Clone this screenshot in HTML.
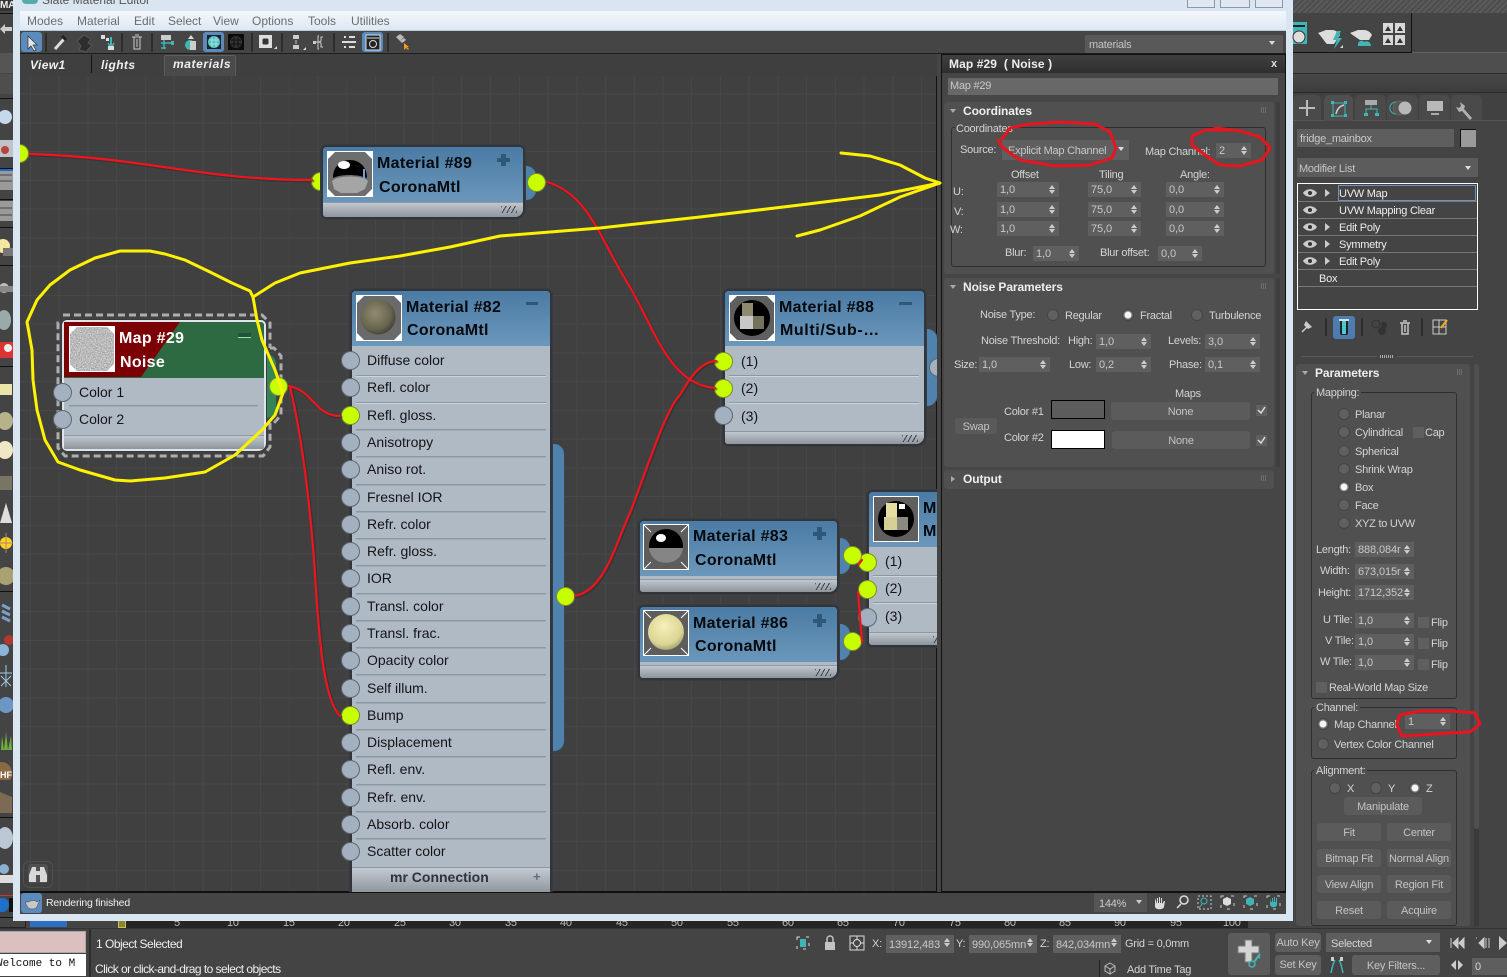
<!DOCTYPE html>
<html><head><meta charset="utf-8"><title>Slate Material Editor</title>
<style>
html,body{margin:0;padding:0;background:#444}
#p{position:relative;width:1507px;height:977px;overflow:hidden;background:#444;font:11px/14px "Liberation Sans",sans-serif;color:#d0d0d0}
#p div,#p span,#p svg{position:absolute;box-sizing:border-box}
.x{white-space:nowrap;color:#d4d4d4;margin-top:1px;letter-spacing:-.25px}
.f{background:#5f5f5f;color:#c8c8c8;padding-left:3px;height:15px;line-height:17px;white-space:nowrap;overflow:hidden;letter-spacing:-.1px}
.f:before,.f:after{content:"";position:absolute;right:4px;width:0;height:0;border-left:3px solid transparent;border-right:3px solid transparent}
.f:before{top:3px;border-bottom:4px solid #ccc}
.f:after{top:8px;border-top:4px solid #ccc}
.btn{background:#5b5b5b;border-radius:3px;color:#c4c4c4;text-align:center;line-height:20px;white-space:nowrap;letter-spacing:-.2px}
.r{width:12px;height:12px;border-radius:50%;background:#606060;border:1px solid #454545}
.r.on{background:radial-gradient(circle,#f4f4f4 0 3px,#6a6a6a 4px)}
.c{width:11px;height:11px;background:#5f5f5f}
.ro{background:#505050;border-radius:3px}
.g{border:1px solid #2f2f2f;border-radius:3px}
.rt{font-weight:bold;font-size:12px;color:#eee;white-space:nowrap;margin-top:1px;letter-spacing:-.1px}
.n{background:#b0bac4;border:2px solid #32363a;border-radius:6px 6px 10px 5px;box-shadow:0 0 0 1px #383c40}
.h{background:linear-gradient(#4a7ba4,#6c97bb);border-radius:4px 4px 0 0;left:0;top:0;right:0}
.ft{background:linear-gradient(#c0c7cd,#8d959d);left:0;right:0;bottom:0;height:13px;border-top:1px solid #8f99a3;border-radius:0 0 8px 4px}
.ft:after{content:"";position:absolute;right:6px;top:3px;width:16px;height:7px;background:repeating-linear-gradient(120deg,#3c4248 0 1px,transparent 1px 4px)}
.b{background:#4f83ad;border:1px solid #3c444c;border-radius:0 11px 11px 0}
.th{width:46px;height:46px;background:#fff}
.tt{font-weight:bold;font-size:16px;line-height:20px;color:#06090d;white-space:nowrap;margin-top:2px;letter-spacing:.3px}
.rw{font-size:14px;line-height:16px;color:#15131a;white-space:nowrap}
.s{width:19px;height:19px;border-radius:50%;background:#a2b0c0;border:1px solid #5f6871}
.y{background:#c8ff00;border:1px solid #7a8a30}
.l{height:2px;background:#cdd5db;border-top:1px solid #8d97a1}
.m{color:#6c6c6c;font-size:12px;white-space:nowrap}
</style></head><body><div id="p">

<!-- backdrop main UI top-right -->
<div style="left:1293px;top:0;width:214px;height:13px;background:repeating-linear-gradient(135deg,#5a5a5a 0 2px,#4d4d4d 2px 4px)"></div>
<div style="left:1293px;top:13px;width:214px;height:40px;background:#444"></div>
<div style="left:1293px;top:13px;width:119px;height:40px;border-right:1px solid #111;border-bottom:1px solid #111"></div>
<div style="left:1412px;top:52px;width:95px;height:1px;background:#666"></div>
<div style="left:1293px;top:53px;width:214px;height:20px;background:#4e4e4e"></div>
<div style="left:1293px;top:73px;width:214px;height:1px;background:#2a2a2a"></div>
<div style="left:1293px;top:74px;width:214px;height:19px;background:linear-gradient(#484848,#3c3c3c)"></div>
<div style="left:1293px;top:92px;width:214px;height:1px;background:#2a2a2a"></div>
<div style="left:1293px;top:93px;width:214px;height:28px;background:#414141"></div>
<div style="left:1293px;top:120px;width:214px;height:1px;background:#555"></div>
<div style="left:1293px;top:95px;width:28px;height:25px;background:#4a4a4a;border-radius:5px 5px 0 0"></div>
<div style="left:1324px;top:95px;width:29px;height:26px;background:#4f4f4f;border-radius:5px 5px 0 0"></div>
<div style="left:1355px;top:95px;width:31px;height:25px;background:#4a4a4a;border-radius:5px 5px 0 0"></div>
<div style="left:1387px;top:95px;width:31px;height:25px;background:#4a4a4a;border-radius:5px 5px 0 0"></div>
<div style="left:1419px;top:95px;width:31px;height:25px;background:#4a4a4a;border-radius:5px 5px 0 0"></div>
<div style="left:1451px;top:95px;width:31px;height:25px;background:#4a4a4a;border-radius:5px 5px 0 0"></div>

<!-- command panel -->
<div style="left:1297px;top:129px;width:157px;height:18px;background:#5e5e5e"></div>
<div class="x" style="left:1300px;top:131px;color:#c8c8c8">fridge_mainbox</div>
<div style="left:1460px;top:129px;width:16px;height:18px;background:#9a9a9a;border-left:1px solid #111;border-top:1px solid #111"></div>
<div style="left:1297px;top:158px;width:181px;height:19px;background:#5c5c5c"></div>
<div class="x" style="left:1299px;top:161px;color:#c4c4c4">Modifier List</div>
<div style="left:1297px;top:183px;width:181px;height:127px;border:1px solid #fff"></div>
<div style="left:1298px;top:201px;width:179px;height:1px;background:#777"></div>
<div style="left:1298px;top:218px;width:179px;height:1px;background:#777"></div>
<div style="left:1298px;top:235px;width:179px;height:1px;background:#777"></div>
<div style="left:1298px;top:252px;width:179px;height:1px;background:#777"></div>
<div style="left:1298px;top:269px;width:179px;height:1px;background:#777"></div>
<div style="left:1298px;top:286px;width:179px;height:1px;background:#777"></div>
<div style="left:1338px;top:185px;width:138px;height:16px;border:1px solid #6f93bd"></div>
<div class="x" style="left:1339px;top:186px;color:#eee">UVW Map</div>
<div class="x" style="left:1339px;top:203px;color:#eee">UVW Mapping Clear</div>
<div class="x" style="left:1339px;top:220px;color:#eee">Edit Poly</div>
<div class="x" style="left:1339px;top:237px;color:#eee">Symmetry</div>
<div class="x" style="left:1339px;top:254px;color:#eee">Edit Poly</div>
<div class="x" style="left:1319px;top:271px;color:#eee">Box</div>
<div style="left:1333px;top:316px;width:22px;height:23px;background:#4e7cb0;border-radius:3px"></div>
<div style="left:1301px;top:356px;width:76px;height:1px;background:#5c5c5c"></div>
<div style="left:1397px;top:356px;width:76px;height:1px;background:#5c5c5c"></div>
<div style="left:1380px;top:355px;width:13px;height:3px;background:repeating-linear-gradient(90deg,#aaa 0 1px,transparent 1px 2px)"></div>

<div class="ro" style="left:1296px;top:364px;width:174px;height:562px"></div>
<div style="left:1474px;top:364px;width:5px;height:562px;background:#3a3a3a;border-radius:2px"></div>
<div style="left:1474px;top:364px;width:5px;height:465px;background:#505050;border-radius:2px"></div>
<div class="rt" style="left:1315px;top:365px">Parameters</div>
<div class="g" style="left:1311px;top:392px;width:146px;height:307px"></div>
<div class="x" style="left:1314px;top:385px;background:#505050;padding:0 2px">Mapping:</div>
<div class="r" style="left:1338px;top:408px"></div><div class="x" style="left:1355px;top:407px">Planar</div>
<div class="r" style="left:1338px;top:426px"></div><div class="x" style="left:1355px;top:425px">Cylindrical</div>
<div class="c" style="left:1413px;top:427px"></div><div class="x" style="left:1425px;top:425px">Cap</div>
<div class="r" style="left:1338px;top:445px"></div><div class="x" style="left:1355px;top:444px">Spherical</div>
<div class="r" style="left:1338px;top:463px"></div><div class="x" style="left:1355px;top:462px">Shrink Wrap</div>
<div class="r on" style="left:1338px;top:481px"></div><div class="x" style="left:1355px;top:480px">Box</div>
<div class="r" style="left:1338px;top:499px"></div><div class="x" style="left:1355px;top:498px">Face</div>
<div class="r" style="left:1338px;top:517px"></div><div class="x" style="left:1355px;top:516px">XYZ to UVW</div>
<div class="x" style="left:1316px;top:542px">Length:</div><div class="f" style="left:1355px;top:542px;width:59px">888,084r</div>
<div class="x" style="left:1320px;top:563px">Width:</div><div class="f" style="left:1355px;top:564px;width:59px">673,015r</div>
<div class="x" style="left:1318px;top:585px">Height:</div><div class="f" style="left:1355px;top:585px;width:59px">1712,352</div>
<div class="x" style="left:1323px;top:612px">U Tile:</div><div class="f" style="left:1355px;top:613px;width:59px">1,0</div><div class="c" style="left:1418px;top:617px"></div><div class="x" style="left:1431px;top:615px">Flip</div>
<div class="x" style="left:1325px;top:633px">V Tile:</div><div class="f" style="left:1355px;top:634px;width:59px">1,0</div><div class="c" style="left:1418px;top:638px"></div><div class="x" style="left:1431px;top:636px">Flip</div>
<div class="x" style="left:1320px;top:654px">W Tile:</div><div class="f" style="left:1355px;top:655px;width:59px">1,0</div><div class="c" style="left:1418px;top:659px"></div><div class="x" style="left:1431px;top:657px">Flip</div>
<div class="c" style="left:1316px;top:682px"></div><div class="x" style="left:1329px;top:680px">Real-World Map Size</div>
<div class="g" style="left:1311px;top:707px;width:146px;height:52px"></div>
<div class="x" style="left:1314px;top:700px;background:#505050;padding:0 2px">Channel:</div>
<div class="r on" style="left:1317px;top:718px"></div><div class="x" style="left:1334px;top:717px">Map Channel:</div>
<div class="f" style="left:1405px;top:714px;width:45px">1</div>
<div class="r" style="left:1317px;top:738px"></div><div class="x" style="left:1334px;top:737px">Vertex Color Channel</div>
<div class="g" style="left:1311px;top:770px;width:146px;height:156px"></div>
<div class="x" style="left:1314px;top:763px;background:#505050;padding:0 2px">Alignment:</div>
<div class="r" style="left:1329px;top:782px"></div><div class="x" style="left:1347px;top:781px">X</div>
<div class="r" style="left:1370px;top:782px"></div><div class="x" style="left:1388px;top:781px">Y</div>
<div class="r on" style="left:1409px;top:782px"></div><div class="x" style="left:1426px;top:781px">Z</div>
<div class="btn" style="left:1344px;top:797px;width:78px;height:18px">Manipulate</div>
<div class="btn" style="left:1317px;top:823px;width:64px;height:18px">Fit</div><div class="btn" style="left:1387px;top:823px;width:64px;height:18px">Center</div>
<div class="btn" style="left:1317px;top:849px;width:64px;height:18px">Bitmap Fit</div><div class="btn" style="left:1387px;top:849px;width:64px;height:18px">Normal Align</div>
<div class="btn" style="left:1317px;top:875px;width:64px;height:18px">View Align</div><div class="btn" style="left:1387px;top:875px;width:64px;height:18px">Region Fit</div>
<div class="btn" style="left:1317px;top:901px;width:64px;height:18px">Reset</div><div class="btn" style="left:1387px;top:901px;width:64px;height:18px">Acquire</div>

<!-- bottom bar -->
<div style="left:0;top:928px;width:1507px;height:1px;background:#333"></div>
<div style="left:118px;top:918px;width:1130px;height:10px;background:#252525"></div>
<div style="left:118px;top:919px;width:8px;height:9px;background:#8a8530;border:1px solid #c8bf60"></div>
<div style="left:30px;top:915px;width:37px;height:12px;background:#2d6fc5"></div>
<div style="left:0;top:915px;width:26px;height:13px;border-right:1px solid #222;border-bottom:1px solid #222"></div>
<div class="x" style="left:174px;top:915px;color:#bbb">5</div><div class="x" style="left:227px;top:915px;color:#bbb">10</div><div class="x" style="left:283px;top:915px;color:#bbb">15</div><div class="x" style="left:338px;top:915px;color:#bbb">20</div><div class="x" style="left:394px;top:915px;color:#bbb">25</div><div class="x" style="left:449px;top:915px;color:#bbb">30</div><div class="x" style="left:505px;top:915px;color:#bbb">35</div><div class="x" style="left:560px;top:915px;color:#bbb">40</div><div class="x" style="left:616px;top:915px;color:#bbb">45</div><div class="x" style="left:671px;top:915px;color:#bbb">50</div><div class="x" style="left:727px;top:915px;color:#bbb">55</div><div class="x" style="left:782px;top:915px;color:#bbb">60</div><div class="x" style="left:837px;top:915px;color:#bbb">65</div><div class="x" style="left:893px;top:915px;color:#bbb">70</div><div class="x" style="left:949px;top:915px;color:#bbb">75</div><div class="x" style="left:1004px;top:915px;color:#bbb">80</div><div class="x" style="left:1059px;top:915px;color:#bbb">85</div><div class="x" style="left:1114px;top:915px;color:#bbb">90</div><div class="x" style="left:1170px;top:915px;color:#bbb">95</div><div class="x" style="left:1223px;top:915px;color:#bbb">100</div>
<div style="left:0;top:931px;width:86px;height:22px;background:#dcc0c0;border:1px solid #aaa;border-left:0"></div>
<div style="left:0;top:954px;width:86px;height:22px;background:#fff;overflow:hidden"><span style="left:-4px;top:3px;font:11px/14px 'Liberation Mono',monospace;color:#111;white-space:nowrap">Welcome to M</span></div>
<div style="left:89px;top:929px;width:2px;height:48px;background:#2d2d2d"></div>
<div class="x" style="left:96px;top:936px;color:#eee;font-size:12px;letter-spacing:-.5px">1 Object Selected</div>
<div class="x" style="left:95px;top:961px;color:#eee;font-size:12px;letter-spacing:-.55px">Click or click-and-drag to select objects</div>
<div class="x" style="left:872px;top:936px">X:</div><div class="f" style="left:886px;top:935px;width:68px;height:18px;line-height:20px">13912,483</div>
<div class="x" style="left:956px;top:936px">Y:</div><div class="f" style="left:969px;top:935px;width:68px;height:18px;line-height:20px">990,065mn</div>
<div class="x" style="left:1040px;top:936px">Z:</div><div class="f" style="left:1053px;top:935px;width:68px;height:18px;line-height:20px">842,034mn</div>
<div class="x" style="left:1125px;top:936px">Grid = 0,0mm</div>
<div style="left:1099px;top:960px;width:1px;height:17px;background:#222"></div>
<div class="x" style="left:1127px;top:962px">Add Time Tag</div>
<div class="btn" style="left:1228px;top:933px;width:42px;height:42px"></div>
<div class="btn" style="left:1275px;top:933px;width:46px;height:19px;background:#5e5e5e">Auto Key</div>
<div class="btn" style="left:1275px;top:955px;width:46px;height:20px;background:#5e5e5e">Set Key</div>
<div style="left:1326px;top:933px;width:114px;height:19px;background:#5e5e5e"></div><div class="x" style="left:1331px;top:936px">Selected</div>
<div class="btn" style="left:1352px;top:955px;width:88px;height:20px;background:#5e5e5e;line-height:22px">Key Filters...</div>
<div style="left:1472px;top:958px;width:35px;height:17px;background:#5e5e5e"></div><div class="x" style="left:1475px;top:959px">0</div>

<!-- left sidebar base -->
<div style="left:0;top:0;width:13px;height:11px;background:#333"></div>
<div class="x" style="left:0;top:-2px;font-weight:bold;color:#eee;font-size:10px">MA</div>
<div style="left:0;top:13px;width:13px;height:1px;background:#111"></div>
<div style="left:0;top:53px;width:13px;height:20px;background:#555"></div>
<div style="left:0;top:74px;width:13px;height:20px;background:#4e4e4e"></div>
<div style="left:0;top:98px;width:13px;height:1px;background:#111"></div>
<div style="left:0;top:168px;width:13px;height:1px;background:#111"></div>
<div style="left:0;top:199px;width:13px;height:1px;background:#111"></div>
<div style="left:0;top:227px;width:13px;height:1px;background:#111"></div>
<div style="left:0;top:265px;width:13px;height:1px;background:#111"></div>
<div style="left:0;top:366px;width:13px;height:1px;background:#111"></div>
<div style="left:0;top:591px;width:13px;height:1px;background:#111"></div>
<div style="left:0;top:817px;width:13px;height:1px;background:#111"></div>
<div style="left:0;top:895px;width:13px;height:1px;background:#c33"></div>
<div style="left:0;top:917px;width:13px;height:1px;background:#111"></div>
<svg style="left:0;top:0" width="13" height="930" viewBox="0 0 13 930">
<path d="M0 29l5-5v3h7v4H5v3z" fill="#ccc"/>
<circle cx="5" cy="117" r="7" fill="#c5d9ee"/>
<rect x="0" y="140" width="13" height="17" fill="#bfc4cc"/><circle cx="5" cy="150" r="4" fill="#b8443c"/>
<rect x="0" y="170" width="13" height="20" fill="#9a9a9a"/><path d="M0 175h12M0 181h12" stroke="#444"/><rect y="169" width="13" height="2" fill="#2266cc"/>
<rect x="0" y="201" width="13" height="20" fill="#9a9a9a"/><path d="M0 208h12M0 215h12" stroke="#444"/>
<circle cx="3" cy="246" r="7" fill="#f5e6a0"/><rect x="3" y="248" width="10" height="8" fill="#777"/>
<circle cx="4" cy="288" r="5" fill="#bbb"/><rect x="0" y="286" width="13" height="6" fill="#888"/>
<ellipse cx="4" cy="320" rx="7" ry="10" fill="#9aa"/>
<rect y="342" width="13" height="16" fill="#d33"/><circle cx="8" cy="348" r="4" fill="#eee"/>
<rect x="0" y="384" width="12" height="11" fill="#ece5a8"/>
<ellipse cx="5" cy="421" rx="8" ry="9" fill="#b6b28a"/>
<ellipse cx="5" cy="450" rx="8" ry="9" fill="#eee8c4"/>
<rect x="0" y="476" width="12" height="14" fill="#7a7464"/>
<path d="M6 503l6 20H0z" fill="#ddd"/>
<circle cx="6" cy="543" r="6" fill="#ffd21f"/><path d="M6 533v20M-2 543h16" stroke="#a87" />
<circle cx="6" cy="576" r="9" fill="#a8a270"/>
<path d="M2 605l8 4M2 611l8 4M2 617l8 4" stroke="#7aa0c8" stroke-width="3"/>
<circle cx="9" cy="640" r="5" fill="#b03a30"/><circle cx="3" cy="650" r="6" fill="#8cb4d8"/>
<path d="M6 665v22M0 673h12M1 686l10-10M1 676l10 10" stroke="#9ec8e0"/>
<circle cx="6" cy="705" r="8" fill="#6c96c4"/>
<path d="M1 750l1-14 2 14 2-18 2 18 3-14 1 14z" fill="#6fae3e"/>
<path d="M0 762c8 0 12 4 12 14l-2 4H0z" fill="#8a6a44"/><text x="0" y="778" font-size="9" fill="#fff" font-weight="bold">HF</text>
<path d="M0 792l12 5v16H0z" fill="#7d6a55"/>
<ellipse cx="5" cy="838" rx="8" ry="11" fill="#bcc8d6"/>
<circle cx="4" cy="869" r="5" fill="#8cb0d0"/><rect y="875" width="13" height="8" fill="#ddd"/>
<circle cx="2" cy="905" r="7" fill="#1f6fcc"/><rect x="9" y="898" width="4" height="14" fill="#111"/>
</svg>

<!-- window -->
<div style="left:13px;top:0;width:1280px;height:921px;background:#d9e5f1"></div>
<div style="left:20px;top:11px;width:1266px;height:20px;background:linear-gradient(#f3f7fc,#dde8f4);border-bottom:1px solid #b8c8d8"></div>
<div style="left:22px;top:0;width:16px;height:4px;background:#5aa;border-radius:0 0 6px 6px"></div>
<div class="x" style="left:42px;top:-8px;color:#555;font-size:12px;letter-spacing:0">Slate Material Editor</div>
<div style="left:1187px;top:-2px;width:28px;height:10px;border:1px solid #8a98a8;background:#dfe8f2"></div>
<div style="left:1220px;top:-2px;width:30px;height:10px;border:1px solid #8a98a8;background:#dfe8f2"></div>
<div style="left:1255px;top:-2px;width:28px;height:10px;border:1px solid #8a98a8;background:#dfe8f2"></div>
<div class="m" style="left:27px;top:14px">Modes</div><div class="m" style="left:77px;top:14px">Material</div><div class="m" style="left:134px;top:14px">Edit</div><div class="m" style="left:168px;top:14px">Select</div><div class="m" style="left:213px;top:14px">View</div><div class="m" style="left:252px;top:14px">Options</div><div class="m" style="left:308px;top:14px">Tools</div><div class="m" style="left:351px;top:14px">Utilities</div>

<div style="left:20px;top:31px;width:1266px;height:883px;background:#454545"></div>
<div style="left:20px;top:53px;width:1266px;height:1px;background:#1d1d1d"></div>
<div style="left:21px;top:32px;width:21px;height:20px;background:#5b8abd;border-radius:3px"></div>
<div style="left:203px;top:32px;width:21px;height:20px;background:#5b8abd;border-radius:3px"></div>
<div style="left:362px;top:32px;width:21px;height:20px;background:#5b8abd;border-radius:3px"></div>
<div style="left:1085px;top:35px;width:198px;height:18px;background:#595959"></div>
<div class="x" style="left:1089px;top:37px;color:#c4c4c4">materials</div>

<!-- tabs -->
<div style="left:20px;top:54px;width:917px;height:22px;background:#3f3f3f"></div>
<div style="left:91px;top:55px;width:1px;height:18px;background:#151515"></div>
<div style="left:164px;top:55px;width:72px;height:21px;background:#4a4a4a;border:1px solid #5e5e5e;border-bottom:0;border-radius:2px 2px 0 0"></div>
<div class="x" style="left:30px;top:57px;font:italic bold 12px/14px 'Liberation Sans',sans-serif;letter-spacing:.4px;color:#f0f0f0">View1</div>
<div class="x" style="left:101px;top:57px;font:italic bold 12px/14px 'Liberation Sans',sans-serif;letter-spacing:.4px;color:#f0f0f0">lights</div>
<div class="x" style="left:173px;top:56px;font:italic bold 12px/14px 'Liberation Sans',sans-serif;letter-spacing:.6px;color:#f0f0f0">materials</div>

<!-- canvas -->
<div style="left:20px;top:76px;width:917px;height:816px;background-color:#404040;background-image:repeating-linear-gradient(90deg,transparent 0 10px,#474747 10px 11px,transparent 11px 28.75px),repeating-linear-gradient(0deg,transparent 0 20px,#474747 20px 21px,transparent 21px 28.75px);border-bottom:1px solid #111;border-right:1px solid #111"></div>

<div style="left:0;top:0;width:937px;height:892px;clip-path:inset(76px 0 0 20px)">
<div class="s y" style="left:10px;top:144px"></div>
<div class="s y" style="left:311px;top:172px"></div>

<!-- #89 -->
<div class="b" style="left:520px;top:165px;width:17px;height:36px"></div>
<div class="s y" style="left:527px;top:173px"></div>
<div class="n" style="left:321px;top:145px;width:204px;height:74px"><div class="h" style="height:56px"></div><div class="ft" style="height:15px"></div></div>
<svg class="th" style="left:327px;top:151px" viewBox="0 0 46 46"><rect width="46" height="46" fill="#fff"/><path d="M8 1H38L45 8V38L38 45H8L1 38V8Z" fill="#6e6e6e"/><path d="M5 30C10 24 36 24 41 30L38 38 30 42H14L7 38Z" fill="#a5a5a5"/><path d="M6 27C6 3 40 3 40 27C30 23 14 23 6 27Z" fill="#000"/><ellipse cx="17" cy="14" rx="6" ry="4" fill="#fff"/><path d="M37 18v10" stroke="#6f9fd0" stroke-width="2"/></svg>
<div class="tt" style="left:377px;top:152px">Material #89</div><div class="tt" style="left:379px;top:176px">CoronaMtl</div>
<div style="left:497px;top:158px;width:13px;height:4px;background:#2d5878"></div><div style="left:501px;top:154px;width:5px;height:12px;background:#2d5878"></div>

<!-- Map 29 selection -->
<svg style="left:50px;top:308px" width="240" height="155" viewBox="50 308 240 155" fill="none" stroke="#aeaeae" stroke-width="3" stroke-dasharray="7 4"><path d="M63 315H262L270 323V348M270 348H274L281 356V415L274 423H270V447L263 456H65L58 448V323Z"/></svg>
<div class="b" style="left:262px;top:353px;width:15px;height:66px;background:#338556"></div>
<div class="n" style="left:62px;top:320px;width:204px;height:131px;border:2px solid #dfe4e8;border-radius:5px 5px 8px 5px"><div class="h" style="height:56px;border-radius:3px 3px 0 0;background:#2e6a41"></div></div>
<svg style="left:64px;top:322px" width="120" height="55"><path d="M0 0H116L77 55H0z" fill="#7b0006"/></svg>
<svg class="th" style="left:69px;top:326px" viewBox="0 0 46 46"><defs><clipPath id="oc"><path d="M8 1H38L45 8V38L38 45H8L1 38V8Z"/></clipPath><filter id="nz" x="0" y="0" width="100%" height="100%" color-interpolation-filters="sRGB"><feTurbulence type="fractalNoise" baseFrequency=".8" numOctaves="2"/><feColorMatrix values=".5 0 0 0 .48 .5 0 0 0 .48 .5 0 0 0 .48 0 0 0 0 1"/></filter></defs><rect width="46" height="46" fill="#fff"/><g clip-path="url(#oc)"><rect width="46" height="46" fill="#b5b5b5" filter="url(#nz)"/></g></svg>
<div class="tt" style="left:119px;top:327px;color:#fff">Map #29</div><div class="tt" style="left:120px;top:351px;color:#fff">Noise</div>
<div style="left:238px;top:333px;width:13px;height:5px;background:#21533a;border-bottom:1px solid #9db"></div>
<div class="l" style="left:69px;top:405px;width:189px;background:#a0aab4"></div>
<div style="left:64px;top:435px;width:200px;height:14px;background:linear-gradient(#c0c7cd,#8d959d);border-top:1px solid #8f99a3"></div>
<div class="rw" style="left:79px;top:384px">Color 1</div><div class="rw" style="left:79px;top:411px">Color 2</div>
<div class="s" style="left:53px;top:383px"></div><div class="s" style="left:53px;top:410px"></div>
<div class="s y" style="left:269px;top:377px"></div>

<!-- #82 -->
<div class="b" style="left:548px;top:443px;width:17px;height:309px"></div>
<div class="n" style="left:350px;top:289px;width:202px;height:610px"><div class="h" style="height:55px"></div></div>
<svg class="th" style="left:356px;top:295px" viewBox="0 0 46 46"><defs><radialGradient id="o1" cx=".42" cy=".4" r=".65"><stop offset="0" stop-color="#8f8c70"/><stop offset=".7" stop-color="#67644e"/><stop offset="1" stop-color="#3e3d30"/></radialGradient></defs><rect width="46" height="46" fill="#fff"/><path d="M8 1H38L45 8V38L38 45H8L1 38V8Z" fill="#6a6a6a"/><circle cx="22" cy="22" r="17.500" fill="url(#o1)"/></svg>
<div class="tt" style="left:406px;top:296px">Material #82</div><div class="tt" style="left:407px;top:319px">CoronaMtl</div>
<div style="left:526px;top:302px;width:12px;height:3px;background:#2d5878"></div>
<div class="l" style="left:356px;top:375px;width:190px"></div><div class="l" style="left:356px;top:402px;width:190px"></div><div class="l" style="left:356px;top:429px;width:190px;background:#a0aab4"></div><div class="l" style="left:356px;top:456px;width:190px;background:#a0aab4"></div><div class="l" style="left:356px;top:484px;width:190px;background:#a0aab4"></div><div class="l" style="left:356px;top:511px;width:190px;background:#a0aab4"></div><div class="l" style="left:356px;top:538px;width:190px;background:#a0aab4"></div><div class="l" style="left:356px;top:565px;width:190px;background:#a0aab4"></div><div class="l" style="left:356px;top:593px;width:190px;background:#a0aab4"></div><div class="l" style="left:356px;top:620px;width:190px;background:#a0aab4"></div><div class="l" style="left:356px;top:647px;width:190px;background:#a0aab4"></div><div class="l" style="left:356px;top:674px;width:190px;background:#a0aab4"></div><div class="l" style="left:356px;top:702px;width:190px;background:#a0aab4"></div><div class="l" style="left:356px;top:729px;width:190px;background:#a0aab4"></div><div class="l" style="left:356px;top:756px;width:190px;background:#a0aab4"></div><div class="l" style="left:356px;top:784px;width:190px;background:#a0aab4"></div><div class="l" style="left:356px;top:811px;width:190px;background:#a0aab4"></div><div class="l" style="left:356px;top:838px;width:190px;background:#a0aab4"></div>
<div class="rw" style="left:367px;top:352px">Diffuse color</div>
<div class="rw" style="left:367px;top:379px">Refl. color</div>
<div class="rw" style="left:367px;top:407px">Refl. gloss.</div>
<div class="rw" style="left:367px;top:434px">Anisotropy</div>
<div class="rw" style="left:367px;top:461px">Aniso rot.</div>
<div class="rw" style="left:367px;top:489px">Fresnel IOR</div>
<div class="rw" style="left:367px;top:516px">Refr. color</div>
<div class="rw" style="left:367px;top:543px">Refr. gloss.</div>
<div class="rw" style="left:367px;top:570px">IOR</div>
<div class="rw" style="left:367px;top:598px">Transl. color</div>
<div class="rw" style="left:367px;top:625px">Transl. frac.</div>
<div class="rw" style="left:367px;top:652px">Opacity color</div>
<div class="rw" style="left:367px;top:680px">Self illum.</div>
<div class="rw" style="left:367px;top:707px">Bump</div>
<div class="rw" style="left:367px;top:734px">Displacement</div>
<div class="rw" style="left:367px;top:761px">Refl. env.</div>
<div class="rw" style="left:367px;top:789px">Refr. env.</div>
<div class="rw" style="left:367px;top:816px">Absorb. color</div>
<div class="rw" style="left:367px;top:843px">Scatter color</div>
<div style="left:352px;top:867px;width:198px;height:25px;background:linear-gradient(#c3cad0,#8f979f);border-top:1px solid #8f99a3"></div>
<div class="x" style="left:390px;top:869px;font-weight:bold;font-size:14px;color:#2a3440;letter-spacing:0">mr Connection</div>
<div class="x" style="left:533px;top:869px;font-weight:bold;font-size:13px;color:#5f7080">+</div>
<div class="s" style="left:341px;top:351px"></div><div class="s" style="left:341px;top:378px"></div><div class="s y" style="left:341px;top:406px"></div><div class="s" style="left:341px;top:433px"></div><div class="s" style="left:341px;top:460px"></div><div class="s" style="left:341px;top:488px"></div><div class="s" style="left:341px;top:515px"></div><div class="s" style="left:341px;top:542px"></div><div class="s" style="left:341px;top:569px"></div><div class="s" style="left:341px;top:597px"></div><div class="s" style="left:341px;top:624px"></div><div class="s" style="left:341px;top:651px"></div><div class="s" style="left:341px;top:679px"></div><div class="s y" style="left:341px;top:706px"></div><div class="s" style="left:341px;top:733px"></div><div class="s" style="left:341px;top:760px"></div><div class="s" style="left:341px;top:788px"></div><div class="s" style="left:341px;top:815px"></div><div class="s" style="left:341px;top:842px"></div>
<div class="s y" style="left:556px;top:587px"></div>

<!-- #88 -->
<div class="b" style="left:921px;top:328px;width:17px;height:79px"></div>
<div class="s" style="left:929px;top:358px"></div>
<div class="n" style="left:723px;top:289px;width:203px;height:157px"><div class="h" style="height:55px"></div><div class="ft"></div></div>
<svg class="th" style="left:729px;top:295px" viewBox="0 0 46 46"><rect width="46" height="46" fill="#fff"/><path d="M8 1H38L45 8V38L38 45H8L1 38V8Z" fill="#5f5f5f"/><circle cx="23" cy="23" r="18" fill="#000"/><rect x="13" y="8" width="11" height="13" fill="#8d8a70"/><rect x="24" y="21" width="11" height="13" fill="#74725c"/><rect x="11" y="21" width="13" height="13" fill="#c8c8c8"/></svg>
<div class="tt" style="left:779px;top:296px">Material #88</div><div class="tt" style="left:780px;top:319px;letter-spacing:.6px">Multi/Sub-…</div>
<div style="left:899px;top:302px;width:13px;height:3px;background:#2d5878"></div>
<div class="l" style="left:729px;top:375px;width:190px"></div><div class="l" style="left:729px;top:402px;width:190px"></div>
<div class="rw" style="left:741px;top:353px">(1)</div><div class="rw" style="left:741px;top:380px">(2)</div><div class="rw" style="left:741px;top:408px">(3)</div>
<div class="s y" style="left:714px;top:352px"></div><div class="s y" style="left:714px;top:379px"></div><div class="s" style="left:714px;top:406px"></div>

<!-- M -->
<div class="n" style="left:867px;top:490px;width:90px;height:157px"><div class="h" style="height:55px"></div><div class="ft"></div></div>
<svg class="th" style="left:873px;top:496px" viewBox="0 0 46 46"><rect width="46" height="46" fill="#fff"/><rect x="1" y="1" width="44" height="44" fill="#5f5f5f"/><circle cx="23" cy="23" r="18" fill="#000"/><rect x="13" y="7" width="11" height="14" fill="#e6dea0"/><rect x="24" y="21" width="11" height="13" fill="#8a8a80"/><rect x="11" y="21" width="13" height="13" fill="#d6cf96"/><rect x="26" y="8" width="6" height="5" fill="#fff"/></svg>
<div class="tt" style="left:923px;top:497px">Material</div><div class="tt" style="left:923px;top:520px">Multi</div>
<div class="l" style="left:873px;top:575px;width:80px"></div><div class="l" style="left:873px;top:602px;width:80px"></div>
<div class="rw" style="left:885px;top:553px">(1)</div><div class="rw" style="left:885px;top:580px">(2)</div><div class="rw" style="left:885px;top:608px">(3)</div>
<div class="s y" style="left:858px;top:553px"></div><div class="s y" style="left:858px;top:580px"></div><div class="s" style="left:858px;top:608px"></div>

<!-- #83 / #86 -->
<div class="b" style="left:834px;top:537px;width:17px;height:38px"></div>
<div class="n" style="left:638px;top:519px;width:201px;height:75px"><div class="h" style="height:55px"></div><div class="ft"></div></div>
<svg class="th" style="left:643px;top:524px" viewBox="0 0 46 46"><rect width="46" height="46" fill="#fff"/><rect x="1" y="1" width="44" height="44" fill="#5d5d5d"/><path d="M1 1l7 7M45 1l-7 7M1 45l7-7M45 45l-7-7" stroke="#fff"/><circle cx="23" cy="22" r="17" fill="#000"/><path d="M6 24H40C39 33 32 39 23 39S7 33 6 24Z" fill="#858585"/><ellipse cx="18" cy="14" rx="5" ry="4" fill="#fff"/></svg>
<div class="tt" style="left:693px;top:525px">Material #83</div><div class="tt" style="left:695px;top:549px">CoronaMtl</div>
<div style="left:813px;top:532px;width:13px;height:4px;background:#2d5878"></div><div style="left:817px;top:527px;width:5px;height:13px;background:#2d5878"></div>
<div class="s y" style="left:843px;top:546px"></div>

<div class="b" style="left:834px;top:623px;width:17px;height:38px"></div>
<div class="n" style="left:638px;top:605px;width:201px;height:75px"><div class="h" style="height:55px"></div><div class="ft"></div></div>
<svg class="th" style="left:643px;top:610px" viewBox="0 0 46 46"><defs><radialGradient id="o2" cx=".45" cy=".35" r=".7"><stop offset="0" stop-color="#f4f0b8"/><stop offset=".7" stop-color="#dcd695"/><stop offset="1" stop-color="#99966a"/></radialGradient></defs><rect width="46" height="46" fill="#fff"/><rect x="1" y="1" width="44" height="44" fill="#5d5d5d"/><path d="M1 1l7 7M45 1l-7 7M1 45l7-7M45 45l-7-7" stroke="#fff"/><circle cx="23" cy="22" r="18" fill="url(#o2)"/></svg>
<div class="tt" style="left:693px;top:612px">Material #86</div><div class="tt" style="left:695px;top:635px">CoronaMtl</div>
<div style="left:813px;top:619px;width:13px;height:4px;background:#2d5878"></div><div style="left:817px;top:614px;width:5px;height:13px;background:#2d5878"></div>
<div class="s y" style="left:843px;top:632px"></div>

<svg style="left:0;top:0" width="937" height="892" viewBox="0 0 937 892" fill="none" stroke-linecap="round">
<g stroke="#2a2a2a" stroke-width="3" opacity=".5" transform="translate(1,1)">
<path d="M30 154C150 158 200 180 312 180"/><path d="M547 182C590 195 600 240 630 287C655 330 670 385 715 388"/><path d="M575 596C605 590 615 545 630 513C645 475 665 410 680 395C690 378 700 362 716 361"/><path d="M289 386C315 392 315 416 340 416"/><path d="M290 387C303 440 312 520 316 590C320 650 325 700 340 716"/>
</g>
<g stroke="#f2131c" stroke-width="2.2">
<path d="M30 154C150 158 200 180 312 180"/><path d="M547 182C590 195 600 240 630 287C655 330 670 385 715 388"/><path d="M575 596C605 590 615 545 630 513C645 475 665 410 680 395C690 378 700 362 716 361"/><path d="M289 386C315 392 315 416 340 416"/><path d="M290 387C303 440 312 520 316 590C320 650 325 700 340 716"/>
<path d="M859 564l3-4M858 592l4 50"/>
</g>
</svg>
</div>

<!-- binoculars + status -->
<div style="left:23px;top:861px;width:30px;height:27px;border:1px solid #4f4f4f;border-radius:6px"></div>
<div style="left:20px;top:892px;width:1266px;height:22px;background:#454545;border-top:1px solid #111"></div>
<div style="left:21px;top:893px;width:21px;height:20px;background:#5b8abd;border-radius:3px"></div>
<div class="x" style="left:46px;top:895px;color:#f0f0f0;font-size:10.5px;letter-spacing:-.2px">Rendering finished</div>
<div style="left:1094px;top:893px;width:53px;height:19px;background:#555"></div>
<div class="x" style="left:1099px;top:896px;color:#ccc">144%</div>

<!-- right material panel -->
<div style="left:941px;top:54px;width:345px;height:838px;background:#464646;border:1px solid #111"></div>
<div style="left:942px;top:55px;width:343px;height:18px;background:linear-gradient(#3f3f3f,#2f2f2f)"></div>
<div class="x" style="left:949px;top:56px;font-weight:bold;font-size:12px;color:#eee;white-space:pre;letter-spacing:.1px">Map #29  ( Noise )</div>
<div class="x" style="left:1271px;top:56px;font-weight:bold;font-size:11px;color:#ddd">x</div>
<div style="left:948px;top:78px;width:330px;height:17px;background:#686868"></div>
<div class="x" style="left:950px;top:78px;color:#c8c8c8">Map #29</div>

<div class="ro" style="left:944px;top:102px;width:330px;height:172px"></div>
<div style="left:1276px;top:102px;width:4px;height:172px;background:#3f3f3f"></div>
<div class="rt" style="left:963px;top:103px">Coordinates</div>
<div class="g" style="left:951px;top:127px;width:315px;height:140px"></div>
<div class="x" style="left:955px;top:121px;background:#505050;padding:0 1px">Coordinates</div>
<div class="x" style="left:960px;top:142px">Source:</div>
<div style="left:1002px;top:140px;width:127px;height:20px;background:#5f5f5f"></div>
<div class="x" style="left:1008px;top:143px;color:#c8c8c8">Explicit Map Channel</div>
<div class="x" style="left:1145px;top:144px">Map Channel:</div>
<div class="f" style="left:1216px;top:143px;width:35px">2</div>
<div class="x" style="left:1011px;top:167px">Offset</div><div class="x" style="left:1099px;top:167px">Tiling</div><div class="x" style="left:1180px;top:167px">Angle:</div>
<div class="x" style="left:953px;top:184px">U:</div><div class="f" style="left:997px;top:182px;width:62px">1,0</div><div class="f" style="left:1088px;top:182px;width:53px">75,0</div><div class="f" style="left:1166px;top:182px;width:58px">0,0</div>
<div class="x" style="left:954px;top:204px">V:</div><div class="f" style="left:997px;top:202px;width:62px">1,0</div><div class="f" style="left:1088px;top:202px;width:53px">75,0</div><div class="f" style="left:1166px;top:202px;width:58px">0,0</div>
<div class="x" style="left:950px;top:222px">W:</div><div class="f" style="left:997px;top:221px;width:62px">1,0</div><div class="f" style="left:1088px;top:221px;width:53px">75,0</div><div class="f" style="left:1166px;top:221px;width:58px">0,0</div>
<div class="x" style="left:1005px;top:245px">Blur:</div><div class="f" style="left:1033px;top:246px;width:46px">1,0</div>
<div class="x" style="left:1100px;top:245px">Blur offset:</div><div class="f" style="left:1158px;top:246px;width:44px">0,0</div>

<div class="ro" style="left:944px;top:278px;width:330px;height:189px"></div>
<div style="left:1276px;top:278px;width:4px;height:189px;background:#3f3f3f"></div>
<div class="rt" style="left:963px;top:279px">Noise Parameters</div>
<div class="x" style="left:980px;top:307px">Noise Type:</div>
<div class="r" style="left:1047px;top:309px"></div><div class="x" style="left:1065px;top:308px">Regular</div>
<div class="r on" style="left:1122px;top:309px"></div><div class="x" style="left:1140px;top:308px">Fractal</div>
<div class="r" style="left:1191px;top:309px"></div><div class="x" style="left:1209px;top:308px">Turbulence</div>
<div class="x" style="left:981px;top:333px">Noise Threshold:</div>
<div class="x" style="left:1068px;top:333px">High:</div><div class="f" style="left:1096px;top:334px;width:55px">1,0</div>
<div class="x" style="left:1168px;top:333px">Levels:</div><div class="f" style="left:1205px;top:334px;width:55px">3,0</div>
<div class="x" style="left:954px;top:357px">Size:</div><div class="f" style="left:979px;top:357px;width:71px">1,0</div>
<div class="x" style="left:1069px;top:357px">Low:</div><div class="f" style="left:1096px;top:357px;width:55px">0,2</div>
<div class="x" style="left:1169px;top:357px">Phase:</div><div class="f" style="left:1205px;top:357px;width:55px">0,1</div>
<div class="x" style="left:1175px;top:386px">Maps</div>
<div class="x" style="left:1004px;top:404px">Color #1</div>
<div style="left:1051px;top:400px;width:54px;height:19px;background:#5c5c5c;border:1px solid #000"></div>
<div class="btn" style="left:1111px;top:402px;width:139px;height:18px">None</div>
<div class="c" style="left:1256px;top:405px"></div>
<div class="btn" style="left:955px;top:418px;width:42px;height:16px;line-height:18px;background:#5a5a5a">Swap</div>
<div class="x" style="left:1004px;top:430px">Color #2</div>
<div style="left:1051px;top:430px;width:54px;height:19px;background:#fff;border:1px solid #000"></div>
<div class="btn" style="left:1112px;top:431px;width:138px;height:18px">None</div>
<div class="c" style="left:1256px;top:435px"></div>
<div class="ro" style="left:944px;top:470px;width:330px;height:19px"></div>
<div class="rt" style="left:963px;top:471px">Output</div>

<!-- icons overlay -->
<svg style="left:0;top:0" width="1507" height="977" viewBox="0 0 1507 977" fill="none">
<!-- editor toolbar -->
<path d="M28 36v13l3-3 3 5 2-1-3-5h4z" fill="#e6e6e6" stroke="#333" stroke-width=".7"/>
<path d="M46 33v19M122 33v19M152 33v19M252 33v19M282 33v19M334 33v19M388 33v19" stroke="#151515"/>
<path d="M55 49l9-10" stroke="#ddd" stroke-width="3"/><path d="M62 36l4 4" stroke="#222" stroke-width="3"/>
<path d="M77 41l7-6 7 4-3 4 4 2-6 7-7-2 2-4z" fill="#2e2e2e" stroke="#555"/>
<rect x="101" y="35" width="4" height="4" fill="#ddd"/><rect x="106" y="38" width="3" height="3" fill="#ddd"/><path d="M111 37v11" stroke="#3fb5b5" stroke-width="2"/><path d="M108 43l3 5 3-5" stroke="#3fb5b5" stroke-width="1.5"/><rect x="108" y="46" width="6" height="4" fill="#ddd"/>
<path d="M132 37h10M134 37v12h6V37M137 39v8M135 35h4" stroke="#ccc"/>
<rect x="161" y="35" width="10" height="5" fill="#ccc"/><path d="M161 43h13M164 40v9M161 48h5" stroke="#3fb5b5" stroke-width="1.5"/><rect x="171" y="41" width="3" height="4" fill="#3fb5b5"/>
<path d="M191 35l3 4h-6z" fill="#ddd"/><circle cx="190" cy="45" r="5" fill="#3fb5b5"/><rect x="190" y="41" width="6" height="9" fill="#ccc"/>
<rect x="207" y="35" width="14" height="14" fill="#222"/><circle cx="214" cy="42" r="6" fill="#54c2c2"/><path d="M209 40h10M209 44h10M212 37v10M216 37v10" stroke="#b8e8e8" stroke-width=".8"/>
<rect x="228" y="34" width="16" height="16" fill="#0c0c0c"/><circle cx="236" cy="42" r="6" fill="#333"/><path d="M231 40h10M231 44h10M234 37v10M238 37v10" stroke="#111"/>
<rect x="259" y="35" width="13" height="13" fill="#ddd"/><rect x="262" y="38" width="7" height="7" fill="#333" stroke="#ddd" rx="2"/><path d="M274 49h3v-3z" fill="#ddd"/>
<rect x="293" y="35" width="6" height="4" fill="#ccc"/><rect x="293" y="45" width="6" height="4" fill="#ccc"/><path d="M296 40v4" stroke="#ccc"/><path d="M303 50h3v-3z" fill="#ddd"/>
<path d="M319 36h-1v13h1M318 42h-4M323 37h-2v4l-2 1 2 1v4h2" stroke="#ccc"/><rect x="313" y="41" width="3" height="3" fill="#ccc"/>
<path d="M344 37h2M344 42h2M344 47h2M349 37h6M349 47h6M342 42h14" stroke="#ddd" stroke-width="2"/>
<rect x="366" y="35" width="14" height="15" fill="#222" stroke="#ddd"/><path d="M367 38h12" stroke="#ddd"/><circle cx="373" cy="44" r="3.500" stroke="#ddd"/>
<path d="M396 37l4-3 4 3-4 4zM400 41l4-3 2 2-4 3z" fill="#bbb"/><path d="M404 43v7l2-2 2 2 1-1-2-2h2z" fill="#f19a1a"/>
<!-- binoculars -->
<rect x="28" y="864" width="20" height="19" rx="3" fill="#505050"/>
<path d="M32 867h4v15h-7v-7zM40 867h4l3 8v7h-7z" fill="#d8d8d8"/><rect x="36" y="871" width="4" height="4" fill="#d8d8d8"/>
<!-- status teapot -->
<path d="M25 902h4c2-2 6-2 8 0l3-2-2 4c-1 4-3 5-6 5s-4-1-6-5z" fill="#c8c8c8" stroke="#444" stroke-width=".5"/>
<!-- status nav -->
<path d="M1155 898v9c1 3 8 3 9 0l1-6-1 0-2 3v-6h-1v5h-1v-6h-1v6h-1v-5h-1v6z" fill="#ddd"/>
<circle cx="1184" cy="900" r="4" stroke="#ddd" stroke-width="1.500"/><path d="M1181 904l-4 4" stroke="#ddd" stroke-width="1.500"/>
<rect x="1198" y="896" width="13" height="13" stroke="#ccc" stroke-dasharray="2 2"/><circle cx="1204" cy="901" r="3" stroke="#3fb5b5"/><path d="M1202 904l-3 4" stroke="#3fb5b5"/>
<rect x="1221" y="896" width="13" height="13" stroke="#ccc" stroke-dasharray="3 7"/><path d="M1227 897l4 2v5l-4 2-4-2v-5z" fill="#ddd"/>
<rect x="1244" y="896" width="13" height="13" stroke="#ccc" stroke-dasharray="3 7"/><path d="M1250 897l4 2v5l-4 2-4-2v-5z" fill="#3fb5b5"/>
<rect x="1267" y="896" width="13" height="13" stroke="#ccc" stroke-dasharray="3 7"/><path d="M1270 899v6c1 3 6 3 7 0v-7h-1v4h-1v-5h-1v5h-1v-4h-1v4h-1z" fill="#3fb5b5"/>
<path d="M1136 900h6l-3 4z" fill="#ccc"/>
<!-- dropdown arrows -->
<path d="M1269 41h6l-3 4zM1118 147h6l-3 4zM1465 166h6l-3 4zM1426 940h6l-3 4z" fill="#ddd"/>
<!-- rollout triangles -->
<path d="M950 109h6l-3 4zM950 285h6l-3 4zM1302 371h6l-3 4z" fill="#aaa"/><path d="M951 476v6l4-3z" fill="#aaa"/>
<!-- grips -->
<path d="M1261 108h6M1261 110h6M1261 112h6M1261 284h6M1261 286h6M1261 288h6M1261 476h6M1261 478h6M1261 480h6M1457 370h6M1457 372h6M1457 374h6" stroke="#8a8a8a" stroke-dasharray="1 1"/>
<!-- checks -->
<path d="M1258 410l3 3 4-6M1258 440l3 3 4-6" stroke="#ddd" stroke-width="1.500"/>
<!-- top right toolbar -->
<rect x="1293" y="22" width="14" height="22" fill="#3fb5b5"/><rect x="1293" y="25" width="12" height="2" fill="#222"/><circle cx="1299" cy="37" r="6" fill="#ddd" stroke="#333"/>
<path d="M1318 33l8-3h6c4 0 7 3 8 5l-6 9h-7c-3-3-5-7-9-11z" fill="#ddd"/><path d="M1337 31l-4 9h4l-3 9 8-11h-4l3-7z" fill="#3fb5b5"/><path d="M1340 48h3v-3z" fill="#ddd"/>
<path d="M1350 33l8-3h6c4 0 7 3 8 5l-3 5h-9c-3-2-6-4-10-7z" fill="#ddd"/><path d="M1358 44c1-4 5-4 6-2 3-2 7 0 7 4h-13z" fill="#3fb5b5"/>
<path d="M1383 23h10v10h-10zM1395 23h10v10h-10zM1383 35h10v10h-10zM1395 35h10v10h-10z" fill="#d8d8d8"/><path d="M1385 31l3-5 3 5zM1397 31l3-5 3 5zM1385 43l3-5 3 5zM1397 43l3-5 3 5z" fill="#333"/>
<!-- command tabs -->
<path d="M1307 100v16M1299 108h16" stroke="#bbb" stroke-width="2"/>
<path d="M1333 103h12v13h-12z" stroke="#3fb5b5"/><path d="M1336 114c1-5 4-8 8-9" stroke="#ccc" stroke-width="1.500"/><rect x="1331" y="101" width="3" height="3" fill="#3fb5b5"/><rect x="1344" y="101" width="3" height="3" fill="#3fb5b5"/><rect x="1331" y="114" width="3" height="3" fill="#3fb5b5"/><rect x="1344" y="114" width="3" height="3" fill="#3fb5b5"/>
<rect x="1365" y="100" width="12" height="5" fill="#aaa"/><path d="M1371 105v4M1366 113v-4h11v4" stroke="#4bb"/><rect x="1364" y="113" width="4" height="3" fill="#3fb5b5"/><rect x="1375" y="113" width="4" height="3" fill="#3fb5b5"/>
<circle cx="1396" cy="108" r="6" stroke="#3fb5b5" fill="#444"/><circle cx="1400" cy="108" r="7" stroke="#666" fill="#555"/><circle cx="1405" cy="108" r="6.500" fill="#b8b8b8"/>
<rect x="1427" y="101" width="16" height="10" fill="#b8b8b8"/><path d="M1431 114h8" stroke="#aaa" stroke-width="2"/>
<path d="M1460 102l5 4-1 3 8 9-2 2-8-9-3 1-3-5 3 1 2-2z" fill="#b0b0b0"/>
<!-- modifier list rows -->
<g fill="#ccc"><path d="M1303 193c3-5 11-5 14 0-3 5-11 5-14 0z"/><path d="M1303 210c3-5 11-5 14 0-3 5-11 5-14 0z"/><path d="M1303 227c3-5 11-5 14 0-3 5-11 5-14 0z"/><path d="M1303 244c3-5 11-5 14 0-3 5-11 5-14 0z"/><path d="M1303 261c3-5 11-5 14 0-3 5-11 5-14 0z"/></g>
<g fill="#333"><circle cx="1310" cy="193" r="2"/><circle cx="1310" cy="210" r="2"/><circle cx="1310" cy="227" r="2"/><circle cx="1310" cy="244" r="2"/><circle cx="1310" cy="261" r="2"/></g>
<path d="M1325 189v8l5-4zM1325 223v8l5-4zM1325 240v8l5-4zM1325 257v8l5-4z" fill="#ccc"/>
<path d="M1302 332l6-6" stroke="#ccc" stroke-width="1.500"/><path d="M1306 321l6 6-4 2-4-4z" fill="#ccc"/>
<path d="M1326 318v18M1362 318v18M1422 318v18" stroke="#151515"/>
<rect x="1340" y="320" width="8" height="15" rx="2" fill="#222"/><rect x="1342" y="321" width="4" height="13" fill="#4cc"/><path d="M1339 320h10" stroke="#ddd" stroke-width="2"/>
<circle cx="1376" cy="324" r="4" stroke="#333"/><circle cx="1384" cy="325" r="3" fill="#333"/><circle cx="1382" cy="331" r="4" fill="#333"/>
<path d="M1400 323h10M1402 323v11h6v-11M1405 325v7M1403 321h4" stroke="#c4c4c4" stroke-width="1.500"/>
<rect x="1433" y="320" width="13" height="14" stroke="#ccc"/><path d="M1433 327h13M1439 320v14" stroke="#ccc"/><path d="M1441 328l6-8" stroke="#f0b020" stroke-width="2"/>
<!-- bottom icons -->
<rect x="797" y="937" width="12" height="12" stroke="#ddd" stroke-dasharray="3 6"/><rect x="800" y="939" width="6" height="8" fill="#3fb5b5"/>
<rect x="825" y="942" width="10" height="8" fill="#c4c4c4"/><path d="M827 942v-3c0-4 6-4 6 0v3" stroke="#c4c4c4" stroke-width="1.500"/>
<rect x="850" y="936" width="14" height="14" stroke="#ddd"/><circle cx="857" cy="943" r="3.500" stroke="#ddd"/><path d="M857 936v4M857 946v4M850 943h4M860 943h4" stroke="#ddd"/>
<path d="M1110 963l5 3v5l-5 3-5-3v-5zM1105 966l5 3 5-3M1110 969v5" stroke="#bbb"/>
<path d="M1245 940h7v6h7v7h-7v9h-7v-9h-7v-7h7z" fill="#d4d4d4" stroke="#777"/>
<circle cx="1252" cy="964" r="3" stroke="#3fb5b5" stroke-width="1.500"/><path d="M1254 962l6-8M1258 956l2 2" stroke="#3fb5b5" stroke-width="2"/>
<path d="M1335 960c-2 3-3 8-4 13M1339 960c2 3 3 8 4 13" stroke="#3fb5b5" stroke-width="1.500"/><rect x="1331" y="957" width="3" height="4" fill="#ccc"/><rect x="1340" y="957" width="3" height="4" fill="#ccc"/>
<path d="M1451 938v10M1458 938v10l-5-5zM1464 938v10l-5-5z" fill="#ccc" stroke="#ccc"/>
<path d="M1476 938h1M1484 938v10l-5-5zM1486 938v10M1489 938v10" fill="#ccc" stroke="#ccc"/><path d="M1499 936v14l8-7z" fill="#ccc"/>
<path d="M1456 960v10l-5-5zM1458 960v10l5-5z" fill="#ccc"/>
<!-- yellow annotations -->
<g stroke="#fff200" stroke-width="3" stroke-linejoin="round" stroke-linecap="round">
<path d="M253 297L250 291 232 283 210 272 185 260 165 254 150 251 120 251 95 258 70 270 50 285 37 300 27 322 32 350 33 380 37 410 45 440 58 462 80 470 115 480 130 481 165 478 205 472 235 455 262 430 275 415 283 393 275 370 262 340 257 320z"/>
<path d="M253 297L275 283 300 273 350 263 400 256 450 247 500 236 600 228 700 217 800 205 880 195 940 183"/>
<path d="M841 153L870 156 900 165 925 178 940 183 900 197 860 216 820 230 797 236"/>
</g>
<!-- red annotations -->
<g stroke="#e8141e" stroke-width="3" stroke-linejoin="round" stroke-linecap="round">
<path d="M1002 139L1010 128 1030 124 1060 122 1095 124 1110 132 1116 148 1112 158 1090 165 1055 166 1020 160 1002 147 998 140"/>
<path d="M1215 128L1240 131 1260 137 1270 148 1262 160 1240 166 1220 165 1205 155 1192 145 1192 136 1205 130 1230 130"/>
<path d="M1397 723L1400 715 1420 711 1450 711 1475 713 1480 724 1470 732 1450 733 1420 735 1402 736 1397 725"/>
</g>
</svg>
</div></body></html>
